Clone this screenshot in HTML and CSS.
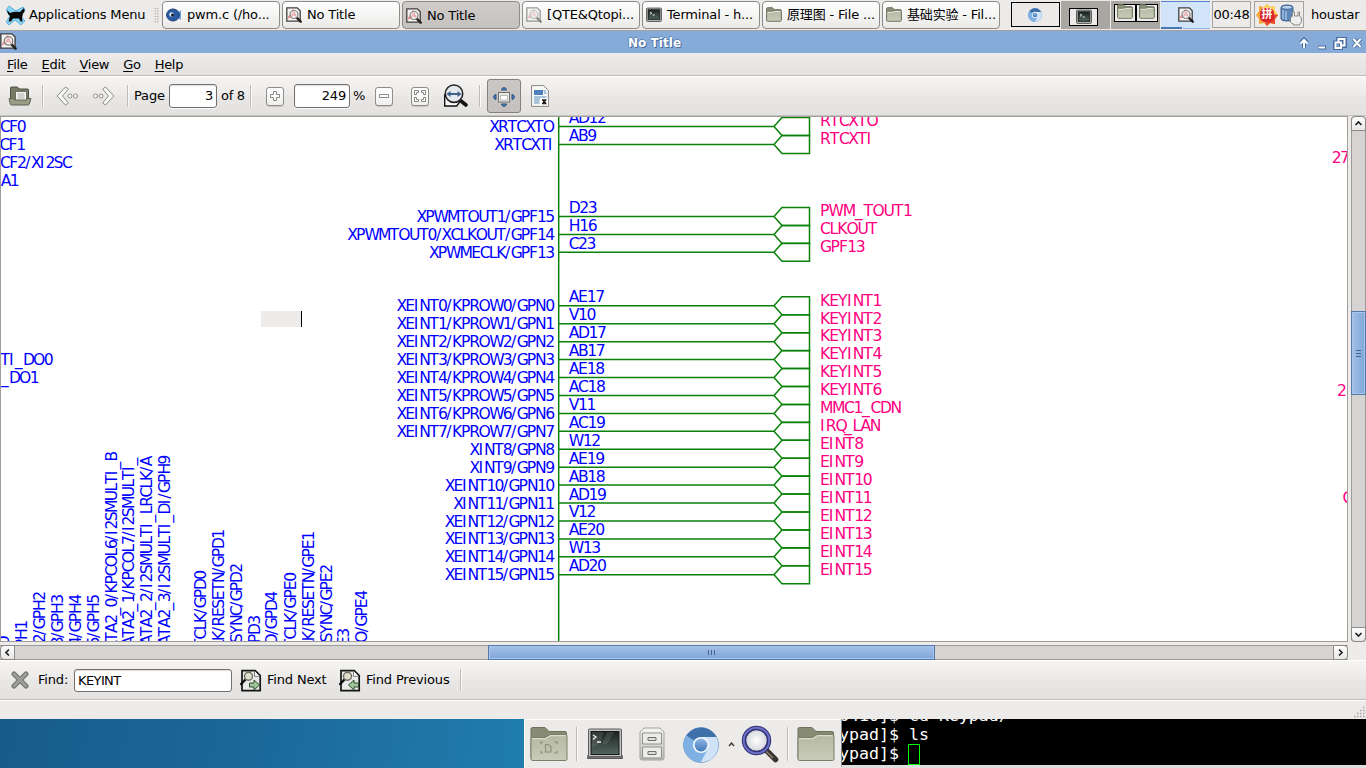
FILE: index.html
```html
<!DOCTYPE html>
<html lang="en">
<head>
<meta charset="utf-8">
<title>No Title</title>
<link rel="stylesheet" href="styles.css">
</head>
<body>
<svg class="defs" width="0" height="0" aria-hidden="true">
  <defs>
    <linearGradient id="gFolder" x1="0" y1="0" x2="0" y2="1"><stop offset="0" stop-color="#b4b9a2"/><stop offset="1" stop-color="#c8ccb8"/></linearGradient>
    <linearGradient id="gMetal" x1="0" y1="0" x2="0" y2="1"><stop offset="0" stop-color="#f6f6f5"/><stop offset="1" stop-color="#bdbdb9"/></linearGradient>
    <linearGradient id="gScreen" x1="0" y1="0" x2="0" y2="1"><stop offset="0" stop-color="#1b2322"/><stop offset="1" stop-color="#53655d"/></linearGradient>
    <linearGradient id="gBlue" x1="0" y1="0" x2="0" y2="1"><stop offset="0" stop-color="#8fb9e6"/><stop offset="1" stop-color="#4478b8"/></linearGradient>
    <radialGradient id="gLens"><stop offset="0" stop-color="#fff"/><stop offset="1" stop-color="#cfd0d8"/></radialGradient>
    <symbol id="pdf" viewBox="0 0 16 16">
      <path d="M.8.8h10.4l3 3v10.4H.8z" fill="#f5f4f3" stroke="#3e3e3e" stroke-width="1.3"/>
      <path d="M2 10l3-2 2-5 2 6 4 2M2 11l5-2" fill="none" stroke="#f08a8d" stroke-width="1.1"/>
      <path d="M10.5 10.5l4.2 4.2" stroke="#222" stroke-width="2.4" stroke-linecap="round"/>
      <circle cx="8" cy="7.5" r="4" fill="#eee" fill-opacity=".8" stroke="#85817f" stroke-width="1.2"/>
      <path d="M5.7 8.7L8 5l2 4M6 8h4" fill="none" stroke="#eba0a2"/>
    </symbol>
    <symbol id="folder" viewBox="0 0 16 16">
      <path d="M.6 13V1.6q0-.9.9-.9h5l1.5 2h6.5q.8 0 .8.9V13z" fill="#8b9079" stroke="#6e725f"/>
      <path d="M.6 5q0-.7.7-.7h5.5l1.2-.9h6.6q.7 0 .7.7v9.300q0 .9-.9.9H1.5q-.9 0-.9-.9z" fill="url(#gFolder)" stroke="#747966"/>
      <path d="M1.6 5.300h5.700l1.200-.9h5.800" fill="none" stroke="#e5e8dc"/>
    </symbol>
    <symbol id="term" viewBox="0 0 16 16">
      <rect x=".6" y="1.1" width="14.8" height="13.3" rx=".8" fill="#b9bab7" stroke="#555753"/>
      <rect x="2.3" y="2.8" width="11.4" height="9.5" fill="url(#gScreen)" stroke="#1c2220"/>
      <path d="M4 5l1.8 1.2L4 7.4M6.5 8h2.3" fill="none" stroke="#e8e8e8"/>
    </symbol>
    <symbol id="chromium" viewBox="0 0 36 36">
      <circle cx="18" cy="18" r="17.3" fill="#7fb0e2" stroke="#5c8fc5"/>
      <path d="M18 18L3.5 8.6A17.3 17.3 0 0 1 33.3 10H18z" fill="#3f6fa8"/>
      <path d="M18 10h15.3A17.3 17.3 0 0 1 17.5 35.3L25.5 21z" fill="#cfe2f6"/>
      <path d="M3.5 8.6A17.3 17.3 0 0 0 17.5 35.3L24 23l-12-1z" fill="#80b1e4"/>
      <circle cx="18" cy="18" r="8.1" fill="#f3f8fd"/><circle cx="18" cy="18" r="6.4" fill="url(#gBlue)"/>
    </symbol>
    <symbol id="findpage" viewBox="0 0 22 23">
      <path d="M2 1.7h13.2l5 5v15H2z" fill="#e9e9e7" stroke="#151515" stroke-width="1.7"/>
      <path d="M14.5 2v5.3h5" fill="#fff" stroke="#7d7d7a"/>
      <path d="M5.5 10.5L1.2 15" stroke="#111" stroke-width="2.5" stroke-linecap="round"/>
      <circle cx="8.5" cy="7.3" r="4" fill="#dfe0cc" stroke="#6f6e66" stroke-width="1.4"/>
    </symbol>
  </defs>
</svg>

<header class="panel">
  <div class="appmenu">
    <svg width="20" height="20" viewBox="0 0 20 20"><path d="M3 1l7 5 7-4 2 3-5 5 5 6-4 4-6-5-6 5-3-3 4-6-4-6z" fill="#86d5f5" stroke="#5cb2dc"/><path d="M1 5l3 3q5-2 10-1l4-4 .7 3.500-1.700 2-1 4.500.5 3.500h-2l-1.500-3H7l-2 3H2.500L4 11 2 9z" fill="#080808"/></svg>
    <span>Applications Menu</span>
  </div>
  <i class="grip"></i>
  <nav class="tasks">
    <div class="task"><svg width="16" height="16" viewBox="0 0 16 16"><path d="M11 7l4-4v10l-3-2z" fill="#6fa0dc"/><ellipse cx="7" cy="8" rx="6.400" ry="6" fill="#2a5aa0" stroke="#193f7a"/><circle cx="5.500" cy="7.500" r="2.300" fill="#d7e3f2"/><circle cx="6.500" cy="8" r="1.500" fill="#101a30"/></svg><span>pwm.c (/ho...</span></div>
    <div class="task"><svg width="16" height="16"><use href="#pdf"/></svg><span>No Title</span></div>
    <div class="task on"><svg width="16" height="16"><use href="#pdf"/></svg><span>No Title</span></div>
    <div class="task"><svg class="dim" width="16" height="16"><use href="#pdf"/></svg><span>[QTE&amp;Qtopi...</span></div>
    <div class="task"><svg width="16" height="16"><use href="#term"/></svg><span>Terminal - h...</span></div>
    <div class="task"><svg width="16" height="16"><use href="#folder"/></svg><span>原理图 - File ...</span></div>
    <div class="task"><svg width="16" height="16"><use href="#folder"/></svg><span>基础实验 - Fil...</span></div>
  </nav>
  <div class="pager">
    <div class="desk d1"><svg width="14" height="14"><use href="#chromium"/></svg></div>
    <div class="desk d2"><b class="mini"><svg width="16" height="16"><use href="#term"/></svg></b></div>
    <div class="desk d3"><b class="mini"><svg width="16" height="16"><use href="#folder"/></svg></b><b class="mini"><svg width="16" height="16"><use href="#folder"/></svg></b></div>
    <div class="desk d4"><svg width="16" height="16"><use href="#pdf"/></svg></div>
  </div>
  <div class="clock">00:48</div>
  <div class="tray">
    <div class="ime"><svg width="22" height="22" viewBox="0 0 22 22"><path d="M11 0l3 3 5-1v5l3 4-3 4v5l-5-1-3 3-3-3-5 1v-5l-3-4 3-4V2l5 1z" fill="#f6a83c"/><path d="M11 0l3 3 5-1v5l3 4-3 1L6 4l2-1z" fill="#fbd45c"/><path d="M22 11l-3 4v5l-5-1-3 3-2-3 8-9z" fill="#e8452d"/><rect x="4" y="4" width="14" height="14" rx="5" fill="#d8262b"/></svg><span>拼</span></div>
    <svg width="23" height="22" viewBox="0 0 23 22"><path d="M2 3q0-2 6-2t6 2v12q0 2-6 2t-6-2z" fill="#5c86ba" stroke="#365d8e"/><path d="M4 6v9M7 7v9" stroke="#a4c0e0" stroke-width="1.500"/><ellipse cx="8" cy="3.300" rx="5.400" ry="2" fill="#bcd0e8" stroke="#466a98"/><path d="M13.500 8v4l-2 2v4q1 2 3 2v1h6v-1q2-1 2-3v-3l-2-2V8h-1.500v4h-3.500V8z" fill="#eee" stroke="#8b8986"/></svg>
  </div>
  <div class="user">houstar</div>
</header>

<section class="titlebar">
  <svg width="17" height="17"><use href="#pdf"/></svg>
  <h1>No Title</h1>
  <svg class="wm" width="64" height="14" viewBox="0 0 64 14"><g fill="none" stroke="#4a6e9e" stroke-width="4"><path d="M6 12V5M2.500 7L6 3.500 9.500 7M20 11.500h8M37 12.500V6.500h6v6zM40 6V3h7v7h-3M55.500 3l7 8M62.500 3l-7 8"/></g><g fill="none" stroke="#fff" stroke-width="2"><path d="M6 12V5M2.500 7.500L6 4l3.500 3.500M20.500 11.500h6.500M37.500 12V6.500h5.500V12zM40.500 6V3h6v6.500h-3M55.500 3l7 8M62.500 3l-7 8"/></g></svg>
</section>

<nav class="menubar"><span><u>F</u>ile</span><span><u>E</u>dit</span><span><u>V</u>iew</span><span><u>G</u>o</span><span><u>H</u>elp</span></nav>

<section class="toolbar">
  <svg class="open" width="24" height="20" viewBox="0 0 24 20"><path d="M2.500 15V2q0-1 1-1h6l1.500 2h8.500q1 0 1 1v11z" fill="#777b66" stroke="#4e5143"/><path d="M7.500 5.500h11v9h-11z" fill="#f5f5f2" stroke="#6d705e"/><path d="M9.500 8h7M9.500 10h7M9.500 12h7" stroke="#aaa"/><path d="M1 12.500h4l1.500 1.500h12l1-1.500h3.500l-1.700 5.500q-.3 1-1.300 1H3.500q-1 0-1.200-1z" fill="#9a9d86" stroke="#5f6252"/></svg>
  <i class="sep s1"></i>
  <svg class="back" width="23" height="20" viewBox="0 0 23 20"><path d="M9.500 1l3 2-6 7 6 7-3 2L1 10z" fill="#f8f8f7" stroke="#8d8b88"/><circle cx="14" cy="10" r="2" fill="#fff" stroke="#8d8b88"/><circle cx="19.500" cy="10" r="2" fill="#fff" stroke="#8d8b88"/></svg>
  <svg class="fwd" width="23" height="20" viewBox="0 0 23 20"><g transform="matrix(-1 0 0 1 23 0)"><path d="M9.500 1l3 2-6 7 6 7-3 2L1 10z" fill="#f8f8f7" stroke="#8d8b88"/><circle cx="14" cy="10" r="2" fill="#fff" stroke="#8d8b88"/><circle cx="19.500" cy="10" r="2" fill="#fff" stroke="#8d8b88"/></g></svg>
  <i class="sep s2"></i>
  <span class="page">Page</span>
  <span class="field f1">3</span>
  <span class="of">of 8</span>
  <i class="sep s3"></i>
  <span class="zbtn z1"><svg width="18" height="18" viewBox="0 0 18 18"><path d="M7.500 4.500h3v3h3v3h-3v3h-3v-3h-3v-3h3z" fill="#fff" stroke="#888683"/></svg></span>
  <span class="field f2">249</span>
  <span class="pct">%</span>
  <span class="zbtn z2"><svg width="18" height="18" viewBox="0 0 18 18"><path d="M4.500 7.500h9v3h-9z" fill="#fff" stroke="#888683"/></svg></span>
  <span class="zbtn z3"><svg width="18" height="18" viewBox="0 0 18 18"><path d="M3.500 3.500h4v2h-2v2h-2zM14.500 3.500v4h-2v-2h-2v-2zM3.500 14.500v-4h2v2h2v2zM14.500 14.500h-4v-2h2v-2h2z" fill="#fff" stroke="#888683"/></svg></span>
  <svg class="fitw" width="25" height="24" viewBox="0 0 25 24"><path d="M1.700 11v11h12l3-4-4-3z" fill="#fff" stroke="#111" stroke-width="1.400"/><path d="M18 17l5 4" stroke="#151515" stroke-width="3.600" stroke-linecap="round"/><circle cx="11" cy="9.700" r="8.700" fill="#e6e9ed" stroke="#252525" stroke-width="1.600"/><path d="M3.500 10L7.500 7v2h7V7l4 3-4 3v-2h-7v2z" fill="#3c6288"/></svg>
  <i class="sep s4"></i>
  <span class="toggle"><svg width="24" height="22" viewBox="0 0 24 22"><g fill="#557fb6" stroke="#2b5189"><path d="M9.500 4q0-2 2.500-2.500 2.500.5 2.500 2.500zM9.500 18q0 2 2.500 2.500 2.500-.5 2.500-2.500zM4 8.500q-2 0-2.500 2.500.5 2.500 2.500 2.500zM20 8.500q2 0 2.500 2.500-.5 2.500-2.500 2.500z"/></g><rect x="6.500" y="6.500" width="11" height="9.500" fill="#e9e8e6" stroke="#73716e"/><path d="M8.500 9.500h7v4.500h-7z" fill="#fff" stroke="#bbb9b6"/></svg></span>
  <svg class="txt" width="18" height="22" viewBox="0 0 18 22"><path d="M.6.6h12l4.800 4.800v16H.6z" fill="#f8f8f7" stroke="#898784"/><path d="M3 5h9v5H3z" fill="#4c7fb9"/><path d="M12.500 6H15M13 8h2.500M3 12h12.500M3 14h6M3 16h5.500M3 18h5.500" stroke="#5d8abd" stroke-width="1.200"/><path d="M9.500 13.500h7.500v6.500H9.500z" fill="#fff"/><path d="M11 14.800h4.500M11 18.700h4.500M11.500 15l3.500 3.500M15 15l-3.500 3.500" stroke="#111" stroke-width="1.100"/></svg>
</section>

<main class="viewer">
  <svg class="sheet" id="sheet" viewBox="1 117 1346 524" width="1346" height="524"></svg>
  <div class="vbar"><b class="btn up"><svg width="9" height="9"><path d="M1.500 6l3-3 3 3" fill="none" stroke="#222" stroke-width="1.700"/></svg></b><i class="thumb"><em></em></i><b class="btn down"><svg width="9" height="9"><path d="M1.500 3l3 3 3-3" fill="none" stroke="#222" stroke-width="1.700"/></svg></b></div>
  <div class="hbar"><b class="btn left"><svg width="9" height="9"><path d="M6 1.500l-3 3 3 3" fill="none" stroke="#222" stroke-width="1.700"/></svg></b><i class="thumb"><em></em></i><b class="btn right"><svg width="9" height="9"><path d="M3 1.500l3 3-3 3" fill="none" stroke="#222" stroke-width="1.700"/></svg></b></div>
</main>

<section class="findbar">
  <svg class="x" width="18" height="18" viewBox="0 0 18 18"><path d="M3 3l12 12M15 3L3 15" stroke="#6f716c" stroke-width="5" stroke-linecap="round"/><path d="M3 3l12 12M15 3L3 15" stroke="#9b9d98" stroke-width="3" stroke-linecap="round"/></svg>
  <span class="lbl">Find:</span>
  <span class="query">KEYINT</span>
  <svg class="n1" width="22" height="23" viewBox="0 0 22 23"><use href="#findpage"/><path d="M9.500 14h4.500v-3l5.500 5-5.500 5v-3H9.500z" fill="#9fc39b" stroke="#2f4f30"/></svg>
  <span class="nx">Find Next</span>
  <svg class="n2" width="22" height="23" viewBox="0 0 22 23"><use href="#findpage"/><path d="M19.500 14H15v-3l-5.500 5 5.500 5v-3h4.500z" fill="#9fc39b" stroke="#2f4f30"/></svg>
  <span class="pv">Find Previous</span>
  <i class="sep s5"></i>
</section>
<section class="status"><svg width="12" height="12" viewBox="0 0 12 12"><path d="M10 1.500h1.500M7 4.500h1.500M10 4.500h1.500M4 7.500h1.500M7 7.500h1.500M10 7.500h1.500M1 10.500h1.500M4 10.500h1.500M7 10.500h1.500M10 10.500h1.500" stroke="#a8a5a1" stroke-width="1.500"/></svg></section>

<footer class="bottom">
  <div class="wall"></div>
  <div class="dock">
    <svg class="k1" width="38" height="34" viewBox="0 0 38 34"><path d="M1 31V2q0-1.500 1.500-1.500H15l4 4h16q1.500 0 1.500 1.500v24z" fill="#878b73" stroke="#6c705c"/><path d="M1 11.500q0-1 1-1h13l5-3h15.500q1.500 0 1.500 1.500v23q0 1.500-1.500 1.500h-33Q1 33.500 1 32z" fill="url(#gFolder)" stroke="#797e69"/><path d="M2 11.700h13.500l5-3h15" fill="none" stroke="#e4e7db"/><path d="M15.500 17.500h3l2.500 2.500v5h-5.500zM11 17v-2h2M24 15h3v2M11 24v2h2M24 26h3v-2" fill="none" stroke="#8d927b" stroke-width="1.200"/></svg>
    <i class="sep"></i>
    <svg class="k2" width="36" height="32" viewBox="0 0 36 32"><path d="M1 27h34l.5 3.500H.5z" fill="#777" stroke="#555"/><rect x="1.500" y="1" width="33" height="27.500" rx="1" fill="#c3c4c1" stroke="#5b5d5a"/><rect x="4" y="3.500" width="28" height="23" fill="url(#gScreen)" stroke="#161b1a"/><path d="M5 4h12l-5 12q-4 3-7 3zM20 4h7l-6 11-6 2z" fill="#fff" opacity=".1"/><path d="M6 7l3 2-3 2.500M10 14h4" fill="none" stroke="#eee" stroke-width="1.300"/></svg>
    <svg class="k3" width="28" height="34" viewBox="0 0 28 34"><path d="M2 5l4-4h16l4 4v26q0 2-2 2H4q-2 0-2-2z" fill="url(#gMetal)" stroke="#a1a19d"/><g fill="#ecece9" stroke="#8f8f8b"><path d="M4.500 6h19v11h-19zM4.500 20h19v11h-19z"/><path d="M10 10.500h8v3h-8zM10 24.500h8v3h-8z" fill="#dededb" stroke="#70706c"/></g></svg>
    <svg class="k4" width="36" height="36"><use href="#chromium"/></svg>
    <svg class="caret" width="7" height="5" viewBox="0 0 7 5"><path d="M1 4l2.500-3L6 4" fill="none" stroke="#333" stroke-width="1.300"/></svg>
    <svg class="k5" width="38" height="38" viewBox="0 0 38 38"><path d="M26 26l8.500 8.500" stroke="#38342f" stroke-width="5.500" stroke-linecap="round"/><path d="M25 26l7 7" stroke="#91806b" stroke-width="1.500"/><circle cx="15.500" cy="15.500" r="12.500" fill="url(#gLens)" stroke="#2f2f75" stroke-width="4.500"/><circle cx="15.500" cy="15.500" r="12.800" fill="none" stroke="#6e70c5" stroke-width="2"/></svg>
    <i class="sep s6"></i>
    <svg class="k6" width="38" height="34" viewBox="0 0 38 34"><path d="M1 31V2q0-1.500 1.500-1.500H15l4 4h16q1.500 0 1.500 1.500v24z" fill="#878b73" stroke="#6c705c"/><path d="M1 11.500q0-1 1-1h13l5-3h15.500q1.500 0 1.500 1.500v23q0 1.500-1.500 1.500h-33Q1 33.500 1 32z" fill="url(#gFolder)" stroke="#797e69"/><path d="M2 11.700h13.500l5-3h15" fill="none" stroke="#e4e7db"/></svg>
  </div>
  <div class="shell"><pre>6410]$ cd Keypad/
ypad]$ ls
ypad]$ <span class="cur"></span></pre></div>
</footer>
<script src="schematic.js"></script>
</body>
</html>
```
FILE: styles.css
```css
* { box-sizing: border-box; }
body {
  margin: 0; width: 1366px; height: 768px; overflow: hidden;
  display: flex; flex-direction: column;
  font: 13px/16px "DejaVu Sans", "Noto Sans CJK SC", sans-serif;
  letter-spacing: -.17px; color: #000; background: #edeceb;
  white-space: nowrap;
}
svg { display: block; flex: none; }
.defs { position: absolute; }
i, b, em { font-style: normal; display: block; flex: none; }

.panel { height: 31px; flex: none; display: flex; background: #edebe9; border-bottom: 1px solid #a5a09b; }
.appmenu { width: 154px; display: flex; align-items: center; padding-left: 6px; gap: 3px; }
.appmenu span { padding-bottom: 1px; }
.grip { width: 5px; height: 16px; margin-top: 7px; background: radial-gradient(circle, #a19e9a 35%, transparent 50%) 0 0 / 2.500px 2.700px; }
.tasks { display: flex; gap: 2px; margin: 1px 0 0 3px; }
.task {
  width: 118px; height: 28px; display: flex; align-items: center; gap: 5px; padding-left: 3px;
  border: 1px solid #8e8b88; border-radius: 4px;
  background: linear-gradient(#fefefe, #f5f5f4 50%, #eae9e8);
}
.task.on { background: linear-gradient(#cfccca, #c4c1be); padding-top: 1px; }
.dim { opacity: .5; }
.pager { display: flex; gap: 1px; margin: 1px 0 0 11px; height: 28px; }
.desk { width: 49px; height: 28px; background: #aaa6a2; display: flex; align-items: center; justify-content: center; }
.d1 { background: #eceae8; border: 1px solid #000; margin-top: 1px; height: 25px; }
.d1 svg { margin-right: 2px; }
.mini { border: 1px solid #000; background: #edebe9; display: flex; justify-content: center; }
.d2 .mini { width: 29px; height: 18px; margin: 4px 4px 0 0; }
.d3 { align-items: flex-start; }
.d3 .mini { width: 22px; height: 18px; margin-top: 3px; }
.d3 .mini svg { margin-top: -1px; }
.d4 { background: linear-gradient(#4a76b5, #4a76b5) 0 100% / 21px 2px no-repeat, linear-gradient(#8fb3e0, #8fb3e0) 100% 100% / 27px 1px no-repeat, #d2e4f9; border-top: 1px solid #5584c3; }
.d4 svg { margin-bottom: 2px; }
.clock { width: 39px; height: 27px; margin: 1px 0 0 2px; border: 1px solid #a5a29f; text-align: center; line-height: 25px; letter-spacing: -.3px; }
.tray { width: 50px; height: 27px; margin: 1px 0 0 3px; border: 1px solid #a5a29f; display: flex; align-items: center; gap: 1px; padding-left: 1px; }
.ime { display: grid; place-items: center; }
.ime > * { grid-area: 1 / 1; }
.ime span { color: #fff; font-size: 11px; line-height: 12px; font-weight: 700; }
.user { margin-left: 7px; line-height: 29px; }

.titlebar { height: 22px; flex: none; display: flex; align-items: center; background: #86abd9; padding-bottom: 1px; }
.titlebar h1 { flex: 1; margin: 3px 0 0; padding-right: 6px; text-align: center; font: bold 12px/16px "DejaVu Sans", sans-serif; color: #fff; text-shadow: 1px 1px 0 #4a6e9e, -1px 0 0 #5e85b8, 0 -1px 0 #5e85b8; letter-spacing: .05px; }
.titlebar .wm { margin: 2px 4px 0 0; }

.menubar { height: 23px; flex: none; display: flex; gap: 14px; padding: 4px 0 0 7px; letter-spacing: -.3px; background: linear-gradient(#edeceb, #e3e2e0); border-bottom: 1px solid #bdbbb8; }
.menubar u { text-underline-offset: 2px; text-decoration-thickness: 1px; }

.toolbar, .findbar { flex: none; display: flex; align-items: center; background: linear-gradient(#f5f4f3, #ebeae9 50%, #e8e7e5 50%, #e3e2e0); border-top: 1px solid #fff; }
.toolbar { height: 40px; padding-left: 8px; border-bottom: 1px solid #c5c3c0; }
.sep { width: 1px; height: 22px; background: #bebcb9; box-shadow: 1px 0 0 #fafafa; }
.s1 { margin-left: 10px; }
.back { margin-left: 13px; }
.fwd { margin-left: 13px; }
.s2 { margin-left: 12px; }
.page { margin-left: 6px; width: 35px; }
.field { height: 24px; border: 1px solid #73706d; border-radius: 3px; background: #fff; text-align: right; line-height: 22px; padding-right: 3px; box-shadow: inset 0 1px 1px #ddd, 0 1px 0 #fafafa; }
.f1 { width: 48px; }
.of { margin-left: 4px; width: 24px; letter-spacing: -.3px; }
.s3 { margin-left: 5px; }
.zbtn { width: 18px; height: 19px; border: 1px solid #8f8d8a; border-radius: 3px; background: linear-gradient(#fff, #f0efee); box-shadow: 0 1px 0 #c8c6c3; display: flex; align-items: center; justify-content: center; }
.z1 { margin-left: 15px; }
.f2 { width: 56px; margin-left: 10px; }
.pct { margin-left: 3px; width: 13px; }
.z2 { margin-left: 9px; }
.z3 { margin-left: 18px; }
.fitw { margin-left: 14px; }
.s4 { margin-left: 11px; }
.toggle { width: 34px; height: 34px; margin-left: 7px; border: 1px solid #83807d; border-radius: 3px; background: linear-gradient(#cbc7c4, #c4c0bd); display: flex; align-items: center; justify-content: center; padding-top: 1px; }
.txt { margin-left: 10px; }

.viewer { flex: none; height: 544px; display: grid; grid-template-columns: 1348px 15px; grid-template-rows: 526px 15px; gap: 3px; }
.sheet { border: 1px solid #a19d99; width: 1348px; height: 526px; background: #fff; overflow: hidden; }
.sheet text { font-family: "DejaVu Sans", sans-serif; font-size: 15.600px; letter-spacing: 0; }
.pin { fill: #00f; }
.net { fill: #ff0080; }
.wire { fill: none; stroke: #0a820a; stroke-width: 1.500; }
.vbar, .hbar { display: flex; background: #d5d4d2; border: 0 solid #9c9a97; }
.vbar { flex-direction: column; border-width: 0 1px; border-radius: 4px; }
.hbar { border-width: 1px 0; }
.btn { background: linear-gradient(#fdfdfd, #e9e8e7); border: 1px solid #8c8986; display: flex; align-items: center; justify-content: center; }
.vbar .btn { height: 15px; width: 15px; margin-left: -1px; }
.hbar .btn { width: 15px; height: 15px; margin-top: -1px; }
.up { border-radius: 4px 4px 0 0; }
.vbar .down { border-radius: 0 0 4px 4px; margin-top: auto; }
.left { border-radius: 4px 0 0 4px; }
.hbar .right { border-radius: 0 4px 4px 0; margin-left: auto; }
.thumb { border: 1px solid #5578ab; display: flex; align-items: center; justify-content: center; box-shadow: inset 0 0 0 1px #a9c5ea; }
.vbar .thumb { width: 15px; height: 84px; margin: 180px 0 0 -1px; background: linear-gradient(90deg, #a3c0e7, #80a6d8); }
.hbar .thumb { height: 15px; width: 447px; margin: -1px 0 0 473px; background: linear-gradient(#a3c0e7, #80a6d8); }
.vbar em { width: 5px; height: 7px; background: repeating-linear-gradient(#41618f 0 1px, transparent 1px 3px); }
.hbar em { height: 5px; width: 7px; background: repeating-linear-gradient(90deg, #41618f 0 1px, transparent 1px 3px); }

.findbar { height: 40px; border-bottom: 1px solid #bfbdba; padding-left: 11px; }
.findbar .lbl { margin-left: 9px; width: 36px; }
.query { width: 158px; height: 23px; line-height: 21px; padding-left: 3px; letter-spacing: -.6px; border: 1px solid #73706d; border-radius: 3px; background: #fff; box-shadow: inset 0 1px 1px #ddd; }
.n1, .n2 { margin-left: 8px; }
.nx { margin-left: 5px; width: 64px; }
.pv { margin-left: 5px; width: 94px; }
.s5 { margin-left: 0; }
.status { height: 19px; flex: none; border-top: 1px solid #fff; display: flex; justify-content: flex-end; align-items: flex-end; padding: 0 1px 1px 0; background: #edebe9; }

.bottom { flex: none; height: 49px; display: flex; }
.wall { width: 524px; background: linear-gradient(100deg, #165c8a, #1b6798 45%, #207dae); }
.dock { width: 317px; background: #edebe9; border: solid #fff; border-width: 1px 0 0 1px; display: flex; align-items: center; padding-left: 5px; }
.dock .sep { height: 34px; }
.k1 + .sep { margin-left: 8px; }
.k2 { margin-left: 10px; }
.k3 { margin-left: 15px; }
.k4 { margin-left: 17px; margin-top: 1px; }
.caret { margin-left: 9px; }
.k5 { margin-left: 6px; }
.s6 { margin-left: 8px; }
.k6 { margin-left: 9px; }
.shell { flex: 1; background: #000; border-left: 1px solid #888; border-bottom: 3px solid #e0dedb; overflow: hidden; }
.shell pre { margin: -13px 0 0 -3px; color: #fff; font: 16.600px/19px "DejaVu Sans Mono", monospace; letter-spacing: 0; }
.cur { display: inline-block; width: 12px; height: 21px; margin-left: -1px; border: 1px solid #0f0; vertical-align: top; }
```
FILE: schematic.js
```js
// Advance widths (per 1000 em) of the sheet's embedded lettering.
const ADV = {
  A: 600, B: 589, C: 601, D: 678, E: 561, F: 521, G: 667, H: 675, I: 373, K: 588,
  L: 498, M: 770, N: 668, O: 708, P: 551, R: 621, S: 557, T: 584, U: 655, V: 596,
  W: 903, X: 581, Y: 576, '/': 382, _: 546
};
const EM = 15.05;
const NS = 'http://www.w3.org/2000/svg';
const sheet = document.getElementById('sheet');

function add(tag, attrs, text) {
  const el = document.createElementNS(NS, tag);
  for (const k in attrs) el.setAttribute(k, attrs[k]);
  if (text) el.textContent = text;
  sheet.appendChild(el);
}

function label(text, x, y, cls, { fromEnd = false, vertical = false, em = EM } = {}) {
  const offsets = [];
  let run = 0;
  for (const ch of text) {
    offsets.push(run);
    run += (ADV[ch] || 546) * em / 1000;
  }
  const start = (vertical ? 0 : x) - (fromEnd ? run : 0);
  const attrs = { class: cls, x: offsets.map(o => (start + o).toFixed(1)).join(' '), y: vertical ? 0 : y };
  if (vertical) attrs.transform = `translate(${x} ${y}) rotate(-90)`;
  add('text', attrs, text);
}

const pins = [
  [126.5, 'XRTCXTO', 'AD12', 'RTCXTO'], [144.5, 'XRTCXTI', 'AB9', 'RTCXTI'],
  [216.4, 'XPWMTOUT1/GPF15', 'D23', 'PWM_TOUT1'],
  [234.4, 'XPWMTOUT0/XCLKOUT/GPF14', 'H16', 'CLKOUT'],
  [252.3, 'XPWMECLK/GPF13', 'C23', 'GPF13']
];
const balls = ['AE17', 'V10', 'AD17', 'AB17', 'AE18', 'AC18', 'V11', 'AC19', 'W12', 'AE19', 'AB18', 'AD19', 'V12', 'AE20', 'W13', 'AD20'];
balls.forEach((ball, i) => {
  const left = i < 8 ? `XEINT${i}/KPROW${i}/GPN${i}` : `${[8, 9, 11].includes(i) ? 'XINT' : 'XEINT'}${i}/GPN${i}`;
  const net = i < 6 ? `KEYINT${i + 1}` : i === 6 ? 'MMC1_CDN' : i === 7 ? 'IRQ_LAN' : `EINT${i}`;
  pins.push([305.8 + i * 17.93, left, ball, net]);
});

add('path', { class: 'wire', d: 'M558.700 117V641' });
for (const [y, left, ball, net] of pins) {
  add('path', { class: 'wire', d: `M559 ${y}H774L782 ${y - 9}H809.500V${y + 9}H782L774 ${y}` });
  label(left, 553.4, Math.round(y + 5.6), 'pin', { fromEnd: true });
  label(ball, 568.8, Math.round(y - 3.5), 'pin', { em: 15.5 });
  label(net, 820, Math.round(y - .2), 'net', { em: 15.65 });
}

[['CF0', 25, 132], ['CF1', 24.5, 150], ['CF2/XI2SC', 71, 168], ['A1', 18, 186],
 ['TI_DO0', 52, 365], ['_DO1', 38, 383]].forEach(([t, x, y]) => label(t, x, y, 'pin', { fromEnd: true }));

label('27', 1331.7, 163, 'net');
label('2', 1337, 396, 'net');
label('C', 1342.6, 503, 'net');

[['/GPH0', 9, 637], ['/GPH1', 27.3, 621.5], ['2/GPH2', 45.3, 592.5], ['3/GPH3', 63.3, 595.5],
 ['4/GPH4', 81, 595.5], ['5/GPH5', 99.3, 595.5],
 ['ATA2_0/KPCOL6/I2SMULTI_B', 117, 452.5], ['ATA2_1/KPCOL7/I2SMULTI_', 134, 457.3],
 ['ATA2_2/I2SMULTI_LRCLK/A', 152, 457.3], ['ATA2_3/I2SMULTI_DI/GPH9', 170, 456.2],
 ['TCLK/GPD0', 206, 571.5], ['LK/RESETN/GPD1', 224, 530.5], ['SYNC/GPD2', 242, 564.5],
 ['GPD3', 259.7, 616.5], ['O/GPD4', 277.3, 592.5], ['TCLK/GPE0', 295.7, 573.5],
 ['LK/RESETN/GPE1', 314, 532.5], ['SYNC/GPE2', 332, 565.5], ['PE3', 349.3, 629.5],
 ['O/GPE4', 367.3, 591.5]].forEach(([t, x, y]) => label(t, x, y, 'pin', { fromEnd: true, vertical: true }));

add('rect', { x: 261, y: 311, width: 40, height: 16, fill: '#edecea' });
add('rect', { x: 301, y: 311, width: 1, height: 16, fill: '#000' });
```
